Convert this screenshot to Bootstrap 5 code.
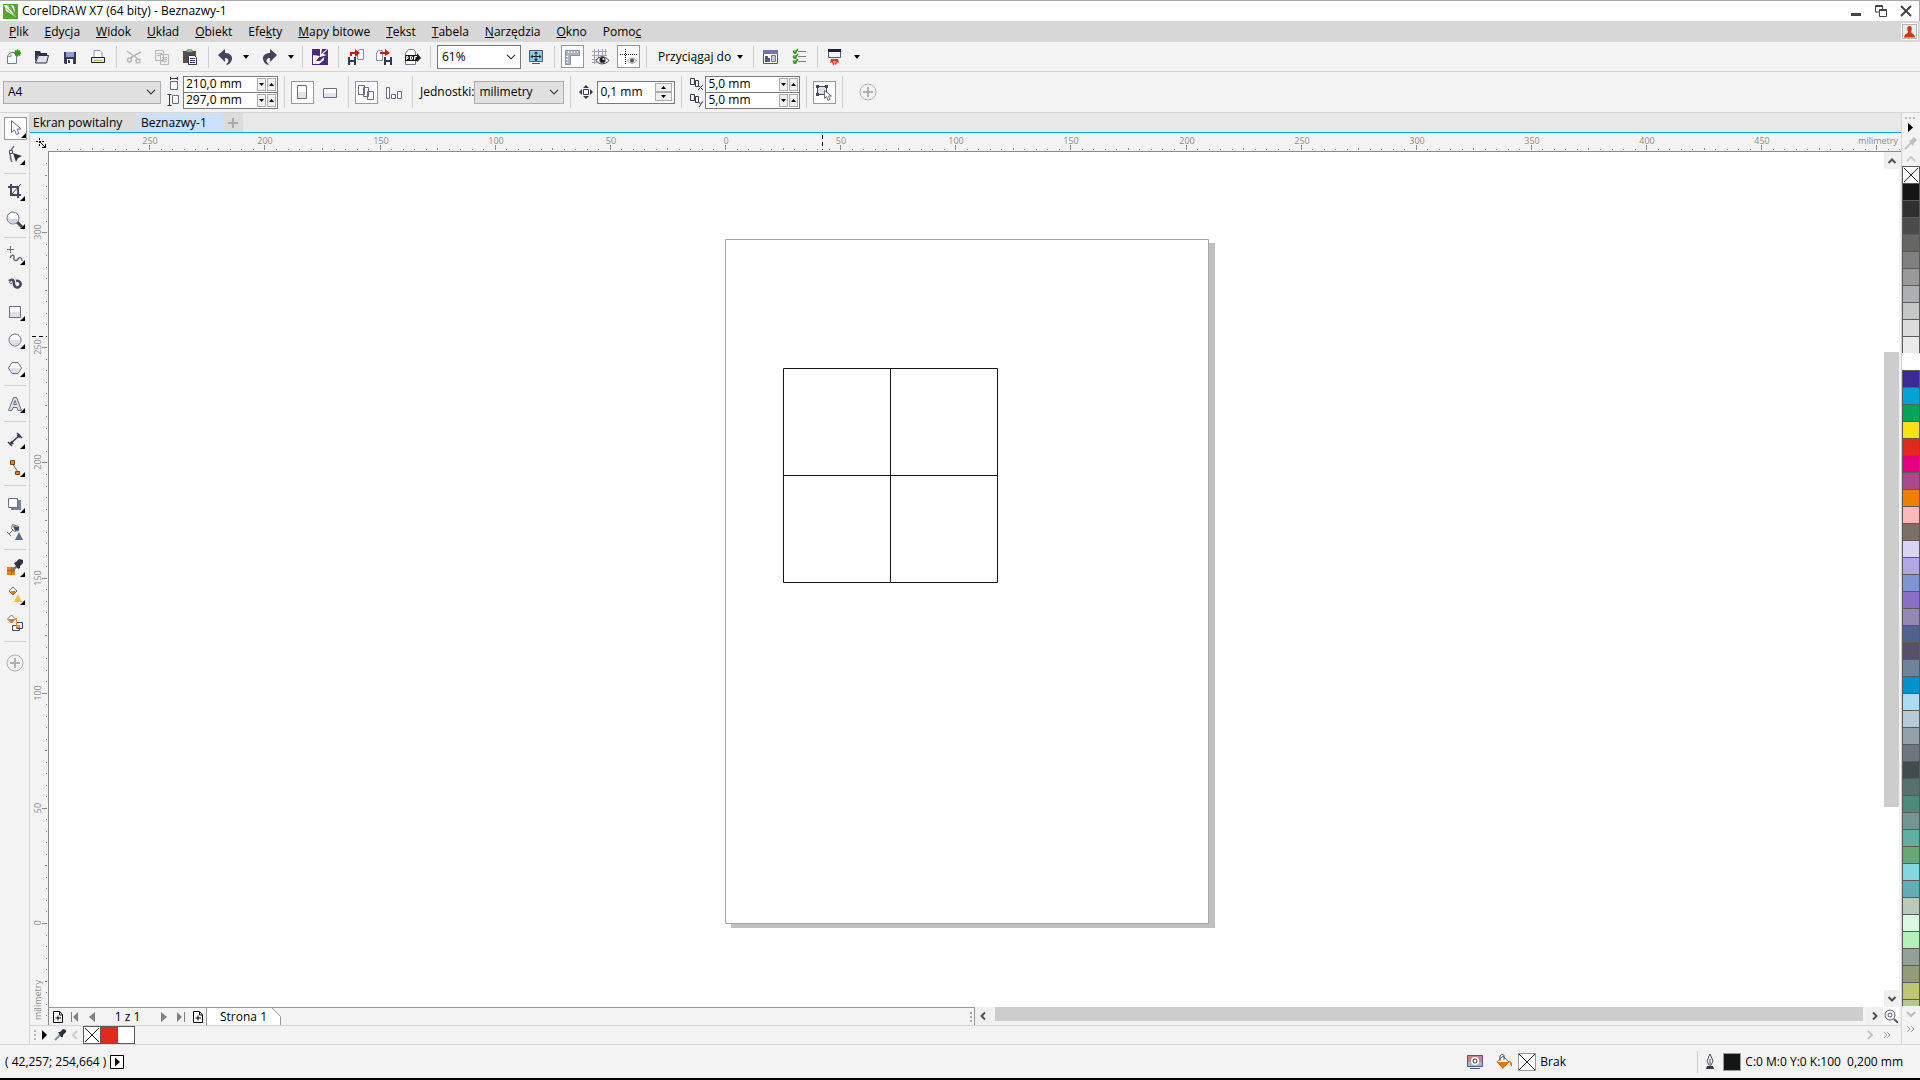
<!DOCTYPE html>
<html lang="pl">
<head>
<meta charset="utf-8">
<meta name="viewport" content="width=device-width, initial-scale=1">
<title>CorelDRAW X7 (64 bity) - Beznazwy-1</title>
<link href="https://cdn.jsdelivr.net/npm/bootstrap@5.3.0/dist/css/bootstrap.min.css" rel="stylesheet">
<script src="https://cdn.jsdelivr.net/npm/bootstrap@5.3.0/dist/js/bootstrap.bundle.min.js" defer></script>
<style>
:root{--ink:#45485f;--bar:#f3f3f3;--edge:#d4d4d4;--frame:#7a7a7a}
body{font-family:"Open Sans","Noto Sans",sans-serif;font-size:12px;line-height:16px;color:#000;background:var(--bar)}
body>*{flex:none}
svg{display:block;flex:none}
.fill{flex:1 1 0;min-width:0;min-height:0}
.btn,.form-select,.form-control{font-size:12px;line-height:16px;border-radius:0;color:#000;box-shadow:none}
.btn{border:0;padding:0;display:flex;align-items:center;justify-content:center}
.titlebar{height:21px;background:#fff;border-top:1px solid #aaa;border-right:1px solid #aaa;padding:0 1px 0 3px}
.winbtn{width:25px;height:20px}
.menubar{height:21px;background:#d7d7d7;padding:0 2px 0 9px;gap:16px}
.menubar a{color:#000;text-decoration:none}
.user-btn{width:17px;height:17px;background:#fff}
.toolrow{border-bottom:1px solid var(--edge)}
.row-std{height:30px}
.row-prop{height:41px;padding-left:3px}
.tool{width:28px;height:28px;flex:none}
.framed{width:23px;height:23px;border:1px solid #999;background:#fff;display:flex;align-items:center;justify-content:center}
.caret-btn{width:15px;height:28px;flex:none}
.vsep{width:1px;height:22px;background:#cfcfcf;margin:0 3px 0 4px;flex:none}
.row-prop .vsep{height:32px}
.vsep-box{margin-left:6px}
.form-select{height:23px;border:1px solid #adadad;background-color:#e1e1e1;padding:2px 20px 2px 4px;background-size:10px 10px;background-position:right 4px center}
.sel-zoom{width:84px;height:24px;border-color:var(--frame);background-color:#fff;margin:0 1px 0 3px}
.sel-paper{width:158px}.sel-unit{width:90px}
.nudge-mark{margin:0 1px 0 2px}
.dup-mark{margin:0 1px 0 4px}
.duo{width:95px;border:1px solid var(--frame);background:#fff}
.duo .spin{height:15px}
.duo .spin + .spin{border-top:1px solid var(--frame);height:16px}
.spin{display:flex;align-items:center;gap:1px;padding-right:1px}
.spin .form-control{border:0;padding:0 0 0 2px;height:15px;min-height:0;background:transparent;min-width:0;flex:1}
.step{width:9px;height:13px;background:#f0f0f0;border:1px solid #adadad}
.nudge{width:78px;height:23px;border:1px solid var(--frame);background:#fff;padding-right:2px}
.nudge .step{width:17px;height:9px}
.toolbox{width:30px;border-right:1px solid var(--edge);padding:1px 0 0 1px;flex:none}
.hsep{width:22px;height:1px;background:#cfcfcf;margin:3px 0 4px 3px}
.tabstrip{height:20px;background:#e8e8e8;border-bottom:1px solid #00a8ff;flex:none}
.doc-tab{height:19px;padding:0 3px;justify-content:flex-start;background:#dcdcdc}
.doc-tab.current{background:#cce0ff}
.tab-a{width:107px}.tab-b{width:86px;padding-left:4px}.tab-plus{width:20px;background:#dcdcdc;padding:0;justify-content:center}
.ruler-row{height:19px;flex:none}
.ruler-h{height:19px;border-bottom:1px solid #8a8a8a}
.ruler-v{width:19px;border-right:1px solid #8a8a8a;flex:none}
.ruler-label{font-size:9px;fill:#8c8c8c}
.canvas{background:#fff}
.vscroll{width:15px;margin-right:2px;background:#fff;flex:none}
.scroll-btn{background:#f0f0f0;width:16px;height:17px;flex:none}
.thumb{background:#cdcdcd}
.navrow{height:18px;padding-right:2px;flex:none}
.pages{width:926px;border-top:1px solid #999;border-right:1px solid #999;flex:none}
.page-btn{width:17px;height:16px}
.page-count{width:55px;text-align:center}
.page-tab{width:66px;height:17px;background:#fff;border-left:1px solid #999}
.strip{height:19px;border-top:1px solid var(--edge);flex:none}
.strip .page-btn{width:15px}
.swatch{width:17px;height:17px;border:1px solid #5a5a5a;border-width:1px 0 0 1px;padding:0;flex:none}
.strip .swatch{border-bottom-width:1px;height:18px}
.strip .swatch-last{width:18px;border-right-width:1px}
.palette{width:19px;flex:none;border-left:1px solid var(--edge)}
.palette .swatch{border-width:1px 1px 0 1px;width:18px}
.status{height:34px;border-top:1px solid var(--edge);padding:0 17px 0 5px}
.status-fill{width:153px}
.cell{width:18px;height:18px;border:1px solid #999}
.taskedge{height:2px;background:#000}
</style>
</head>
<body class="vh-100 d-flex flex-column overflow-hidden">

<header class="titlebar d-flex align-items-center">
  <svg width="15" height="15" viewBox="0 0 15 15"><path fill="#55a532" d="M0 0h15v15H0z"/><path fill="#fff" d="M1 1h4l8 12L3 7z"/><path stroke="#55a532" d="M1 3l11 9M4 1l9 11" stroke-width=".7"/><path fill="#fff" d="M8 1l3 1 1 7z"/></svg>
  <span class="ms-1">CorelDRAW X7 (64 bity) - Beznazwy-1</span>
  <div class="ms-auto d-flex">
    <button class="btn winbtn" aria-label="Minimalizuj"><svg width="12" height="12"><path fill="#444" d="M1 8h10v3H1z"/></svg></button>
    <button class="btn winbtn" aria-label="Przywróć"><svg width="12" height="12" fill="none" stroke="#444"><path d="M4 7H.5V.5h7V4M.5 1.5h7M4.500 4.500h7v7h-7zM4.500 5.500h7"/></svg></button>
    <button class="btn winbtn" aria-label="Zamknij"><svg width="12" height="12"><path stroke="#444" stroke-width="2" d="M1 1l10 10M11 1L1 11"/></svg></button>
  </div>
</header>

<nav class="menubar d-flex align-items-center">
  <a href="#"><u>P</u>lik</a><a href="#"><u>E</u>dycja</a><a href="#"><u>W</u>idok</a><a href="#"><u>U</u>kład</a><a href="#"><u>O</u>biekt</a><a href="#">Efe<u>k</u>ty</a><a href="#"><u>M</u>apy bitowe</a><a href="#"><u>T</u>ekst</a><a href="#"><u>T</u>abela</a><a href="#"><u>N</u>arzędzia</a><a href="#"><u>O</u>kno</a><a href="#">Pomo<u>c</u></a>
  <button class="btn user-btn ms-auto" aria-label="Konto"><svg width="15" height="15"><rect x=".5" y=".5" width="14" height="14" fill="#e9ecee" stroke="#b5b5b5"/><path fill="#cf3a12" d="M7.500 2C5.500 2 5 3.500 5.200 5c.1 1.500.8 2 .8 3 0 1.500-4 2-4 5.500h11C13 10 9 9.500 9 8c0-1 .7-1.500.8-3C10 3.500 9.500 2 7.500 2z"/></svg></button>
</nav>

<div class="toolrow row-std d-flex align-items-center">
  <button class="btn tool" aria-label="Nowy"><svg width="20" height="20"><path d="M3.500 16.500V9l3-3.500h4l2 3v8z" fill="#f8f8fb" stroke="#777a8c"/><path d="M4 9.500h3v-3" fill="none" stroke="#999"/><circle cx="13.500" cy="6" r="2.500" fill="#2c9a0c"/><path stroke="#2c9a0c" stroke-width="1.500" d="M13.500 2.500v7M10 6h7M11 3.500l5 5M16 3.500l-5 5"/></svg></button>
  <button class="btn tool" aria-label="Otwórz"><svg width="20" height="20"><path fill="#2c2f4e" d="M3 15V4h5l1 2h6v2H6z"/><path d="M6.500 8.500h10l-2 7.500H3.500z" fill="#dfe0ea" stroke="#2c2f4e"/></svg></button>
  <button class="btn tool" aria-label="Zapisz"><svg width="20" height="20"><path fill="#34375e" d="M4 5h12v12H5l-1-1z"/><path fill="#8c9ccb" d="M6 5h8v5H6z"/><path fill="#fff" d="M7 12h6v5H7z"/><path fill="#34375e" d="M8 13h2v3H8z"/></svg></button>
  <button class="btn tool" aria-label="Drukuj"><svg width="20" height="20"><path d="M6 11V3.500h6l2 2V11" fill="#fff" stroke="#8798a5"/><path d="M3.500 10.500h13v5h-13z" fill="#e8e8ee" stroke="#222"/><path fill="#b9b94a" d="M6 13h8v1H6z"/><path stroke="#222" d="M5 10.500h10"/></svg></button>
  <span class="vsep"></span>
  <button class="btn tool" aria-label="Wytnij" disabled><svg width="20" height="20" fill="none" stroke="#999" stroke-width="1.500"><path d="M3 4l11 8M17 5L6 11"/><circle cx="5.500" cy="13" r="2"/><circle cx="14" cy="14" r="2"/></svg></button>
  <button class="btn tool" aria-label="Kopiuj" disabled><svg width="20" height="20" fill="#eee" stroke="#999"><path d="M3.500 3.500h8v10h-8zM8.500 7.500h8v10h-8z"/><path d="M5 6.500h5M5 8.500h3M10 10.500h5M10 12.500h5M10 14.500h5"/></svg></button>
  <button class="btn tool" aria-label="Wklej"><svg width="20" height="20"><path fill="#565046" d="M3 4h13v12H3z"/><path fill="#cfdbd2" d="M6 5c0-3 7-3 7 0z" stroke="#38634d"/><path fill="#fff" stroke="#34375e" d="M8.500 8.500h6l2 2v7h-8z"/><path stroke="#34375e" d="M10 11.500h5M10 13.500h5M10 15.500h5"/></svg></button>
  <span class="vsep"></span>
  <button class="btn tool" aria-label="Cofnij"><svg width="20" height="20"><path fill="#45435a" d="M2 8l7-6v4c8 0 9 7 4 11-1 .8-3 1-3 0 3-1 4-6-1-6v4z"/></svg></button>
  <button class="btn caret-btn pe-1" aria-label="Lista cofania"><svg width="10" height="6"><path d="M2 1h6L5 5z"/></svg></button>
  <button class="btn tool" aria-label="Ponów"><svg width="20" height="20"><path fill="#45435a" d="M18 8l-7-6v4C3 6 2 13 7 17c1 .8 3 1 3 0-3-1-4-6 1-6v4z"/></svg></button>
  <button class="btn caret-btn me-1" aria-label="Lista ponawiania"><svg width="10" height="6"><path d="M2 1h6L5 5z"/></svg></button>
  <span class="vsep ms-0"></span>
  <button class="btn tool" aria-label="Corel CONNECT"><svg width="20" height="20"><path fill="#4b2a7b" d="M2 2h16v16H2z"/><path fill="#fff" d="M10 2h2l-1 5 6-5h1l-5 5 4 1-7 2zM3 8l7 1-4 5h4l4-4v3l-5 4H3z"/></svg></button>
  <span class="vsep"></span>
  <button class="btn tool" aria-label="Importuj"><svg width="20" height="20"><path d="M11.500 12.500V5l2-2.500h4v10z" fill="#fff" stroke="#8a8da8"/><path fill="#34375e" d="M2 10h8v8H2z"/><path fill="#fff" d="M4 10h4v3H4zM4 15h4v3H4z"/><path fill="#c61b12" d="M4 5h5V2l5 4-5 4V7H6v2H4z"/></svg></button>
  <button class="btn tool" aria-label="Eksportuj"><svg width="20" height="20"><path d="M2.500 13.500V6l2-2.500h4v10z" fill="#fff" stroke="#8a8da8"/><path fill="#34375e" d="M10 10h8v8h-8z"/><path fill="#fff" d="M12 10h4v3h-4zM12 15h4v3h-4z"/><path fill="#c61b12" d="M6 5h5V2l5 4-5 3V7H6z"/></svg></button>
  <button class="btn tool" aria-label="Publikuj do PDF"><svg width="20" height="20"><path d="M3.500 17.500V6l3-3.500h5l2 2v13z" fill="#fff" stroke="#777a8c"/><path fill="#18181c" d="M3 8h12V6l4 5-4 4v-1H3z"/><path stroke="#fff" fill="none" d="M4.500 13V9.500H6v2H4.500M8.500 9.500v3l2-.5V10zM12.500 13V9.500H15M12.500 11H14"/></svg></button>
  <span class="vsep"></span>
  <select class="form-select sel-zoom" aria-label="Poziom powiększenia"><option>61%</option></select>
  <button class="btn tool" aria-label="Podgląd pełnoekranowy"><svg width="20" height="20"><path d="M3.500 3.500h13v11h-13z" fill="#8ccbe0" stroke="#555873"/><path stroke="#555873" d="M6 16.500h8"/><path stroke="#16243c" d="M5 9.500h10M10 5v9"/><path fill="#16243c" d="M4.500 9.500l2-2v4zM15.500 9.500l-2-2v4zM10 4.500l2 2H8zM10 14l2-2H8z"/></svg></button>
  <span class="vsep"></span>
  <button class="btn tool" aria-label="Pokaż linijki"><span class="framed"><svg width="20" height="20"><path fill="#a7b3cb" stroke="#8492b0" d="M3.500 3.500h14v5h-9v9h-5z"/><path stroke="#fff" d="M6.500 4v2M9.500 4v2M12.500 4v2M15.500 4v2M4 9.500h2M4 12.500h2M4 15.500h2"/></svg></span></button>
  <button class="btn tool" aria-label="Pokaż siatkę"><svg width="20" height="20"><path stroke="#a3a1bd" d="M4.500 2v15M8.500 2v9M12.500 2v8M15.500 2v7M2 4.500h15M2 8.500h15M2 12.500h5M2 15.500h5"/><path fill="#f3f3f3" stroke="#3c3c46" d="M6 13.500c3-5 9-5 13 0-4 4.500-10 4.500-13 0z"/><circle cx="12.500" cy="13" r="3" fill="#22222c"/><circle cx="13.500" cy="12" r="1" fill="#fff"/></svg></button>
  <button class="btn tool" aria-label="Pokaż linie pomocnicze"><span class="framed"><svg width="20" height="20"><path stroke="#222" stroke-dasharray="1 1" d="M7.500 2v16M2 7.500h17"/><path fill="#fff" stroke="#999" d="M9.500 14c3-4 6-4 9 0-3 3-6 3-9 0z"/><circle cx="14" cy="13.500" r="2" fill="#50505e"/></svg></span></button>
  <span class="vsep"></span>
  <button class="btn ps-2 pe-1" aria-haspopup="true">Przyciągaj do<svg class="ms-1" width="10" height="6"><path d="M2 1h6L5 5z"/></svg></button>
  <span class="vsep"></span>
  <button class="btn tool" aria-label="Okno powitalne"><svg width="20" height="20"><path d="M2.500 3.500h14v13h-14z" fill="#fff" stroke="#55587c"/><path fill="#7376a0" d="M2 3h15v4H2z"/><path fill="#55587c" d="M4 9h3v2h2v4H4z"/><path d="M10.500 8.500h4v6h-4z" fill="#c6cadf" stroke="#7376a0"/></svg></button>
  <button class="btn tool" aria-label="Opcje"><svg width="20" height="20"><path stroke="#7c808d" d="M9 4.500h8M9 9.500h8M9 14.500h8"/><path stroke="#aaa" fill="none" d="M4.500 3.500h3v3h-3zM4.500 8.500h3v3h-3zM4.500 13.500h3v3h-3z"/><path stroke="#2c9a0c" stroke-width="1.500" fill="none" d="M4 4l2 2 3-4M4 9l2 2 3-4M4 14l2 2 3-4"/></svg></button>
  <span class="vsep"></span>
  <button class="btn tool" aria-label="Uruchamianie aplikacji"><svg width="20" height="20"><path d="M3.500 2.500h12v8h-12z" fill="#f4f4f8" stroke="#55587c"/><path fill="#1f2136" d="M3 2h13v3H3z"/><path fill="#e5321c" d="M6 12h7l1 4-2-1-1 3-1-1-2 1-1-3-2 1z"/><path fill="#f9c21c" d="M8 14h3l-1.500 4z"/></svg></button>
  <button class="btn caret-btn" aria-label="Lista aplikacji"><svg width="10" height="6"><path d="M2 1h6L5 5z"/></svg></button>
</div>

<div class="toolrow row-prop d-flex align-items-center">
  <select class="form-select sel-paper" aria-label="Rozmiar strony"><option>A4</option></select>
  <svg class="mx-1" width="14" height="32" fill="none" stroke="#33364f"><path d="M5.500 5.500h7v8h-7z" fill="#fff" stroke="#6a6d85"/><path d="M5 2.500h8M5.500 1v3M12.500 1v3M4.500 19v10M2.500 18.500h4M2.500 29.500h4"/><path d="M7.500 19.500h6v8h-6z" fill="#fff" stroke="#6a6d85"/></svg>
  <div class="duo">
    <div class="spin"><input class="form-control" value="210,0 mm" aria-label="Szerokość strony"><button class="btn step" aria-label="Mniej"><svg width="5" height="3"><path d="M0 0h5L2.500 3z"/></svg></button><button class="btn step" aria-label="Więcej"><svg width="5" height="3"><path d="M0 3h5L2.500 0z"/></svg></button></div>
    <div class="spin"><input class="form-control" value="297,0 mm" aria-label="Wysokość strony"><button class="btn step" aria-label="Mniej"><svg width="5" height="3"><path d="M0 0h5L2.500 3z"/></svg></button><button class="btn step" aria-label="Więcej"><svg width="5" height="3"><path d="M0 3h5L2.500 0z"/></svg></button></div>
  </div>
  <span class="vsep vsep-box"></span>
  <button class="btn tool" aria-label="Pionowo"><span class="framed"><svg width="20" height="20"><path d="M5.500 3.500h9v13h-9z" fill="#fff" stroke="#6a6d85"/><path fill="#e2e2ea" d="M6 10h8v6H6z"/></svg></span></button>
  <button class="btn tool" aria-label="Poziomo"><svg width="20" height="20"><path d="M3.500 6.500h13v9h-13z" fill="#fff" stroke="#6a6d85"/><path fill="#e2e2ea" d="M4 11h12v4H4z"/></svg></button>
  <span class="vsep"></span>
  <button class="btn tool" aria-label="Wszystkie strony"><span class="framed"><svg width="20" height="20" fill="#fff" stroke="#6a6d85"><path d="M2.500 3.500h6v9h-6zM7.500 5.500h5v9h-5zM11.500 9.500h6v8h-6z"/></svg></span></button>
  <button class="btn tool" aria-label="Bieżąca strona"><svg width="20" height="20" fill="#fff" stroke="#6a6d85"><path d="M2.500 5.500h3v11h-3zM7.500 12.500h4v4h-4zM13.500 9.500h4v7h-4z"/></svg></button>
  <span class="vsep"></span>
  <label class="ms-1" for="units">Jednostki:</label>
  <select id="units" class="form-select sel-unit"><option>milimetry</option></select>
  <span class="vsep vsep-box"></span>
  <svg class="nudge-mark" width="20" height="20"><path fill="#33364f" d="M10 3l3 3H7zM10 17l3-3H7zM3 10l3-3v6zM17 10l-3-3v6z"/><path fill="#fff" stroke="#33364f" d="M7.500 7.500h5v5h-5z"/></svg>
  <div class="nudge spin"><input class="form-control" value="0,1 mm" aria-label="Odległość przesunięcia"><div class="d-flex flex-column"><button class="btn step" aria-label="Więcej"><svg width="5" height="3"><path d="M0 3h5L2.500 0z"/></svg></button><button class="btn step" aria-label="Mniej"><svg width="5" height="3"><path d="M0 0h5L2.500 3z"/></svg></button></div></div>
  <span class="vsep vsep-box"></span>
  <svg class="dup-mark" width="15" height="32" fill="none" stroke="#33364f"><path d="M1.500 2.500h4v6h-4zM6.500 4.500h3v6h-3zM9 9l5 5M14 9l-5 5M1.500 18.500h4v6h-4zM6.500 20.500h3v6h-3zM9 25l2.500 3M14 25l-4 6"/></svg>
  <div class="duo">
    <div class="spin"><input class="form-control" value="5,0 mm" aria-label="Duplikat X"><button class="btn step" aria-label="Mniej"><svg width="5" height="3"><path d="M0 0h5L2.500 3z"/></svg></button><button class="btn step" aria-label="Więcej"><svg width="5" height="3"><path d="M0 3h5L2.500 0z"/></svg></button></div>
    <div class="spin"><input class="form-control" value="5,0 mm" aria-label="Duplikat Y"><button class="btn step" aria-label="Mniej"><svg width="5" height="3"><path d="M0 0h5L2.500 3z"/></svg></button><button class="btn step" aria-label="Więcej"><svg width="5" height="3"><path d="M0 3h5L2.500 0z"/></svg></button></div>
  </div>
  <span class="vsep vsep-box"></span>
  <button class="btn tool" aria-label="Traktuj jako wypełnione"><span class="framed"><svg width="20" height="20"><path d="M3.500 4.500h9v8h-9z" fill="#dcdfe8" stroke="#45485f"/><path fill="#45485f" d="M2 3h3v3H2zM11 3h3v3h-3zM2 11h3v3H2z"/><path fill="#fff" stroke="#6a6d85" d="M10.500 8.500v8l2-2 1.500 4 2-1-1.500-3.500h3z"/></svg></span></button>
  <span class="vsep"></span>
  <button class="btn tool ms-2" aria-label="Dostosuj"><svg width="20" height="20" fill="none" stroke="#b0b0b0"><circle cx="10" cy="10" r="8"/><path stroke-width="2" d="M10 5v10M5 10h10"/></svg></button>
</div>

<main class="d-flex fill overflow-hidden">
  <aside class="toolbox" id="toolbox">
    <button class="btn tool" aria-label="Wskaźnik"><span class="framed"><svg width="28" height="28"><path fill="#fff" stroke="#6a6d85" d="M10.500 6.500v12l3-2.500 2 4.500 2.500-1-2-4.500h4z"/><path d="M25 19v5h-5z"/></svg></span></button>
    <button class="btn tool" aria-label="Kształt"><svg width="28" height="28"><path fill="none" stroke="#6a6d85" stroke-width="1.500" d="M13 4c-5 5-5 10-2 16"/><path fill="#fff" stroke="#45485f" d="M8.500 8.500h3v3h-3z"/><path fill="#2c2f3e" d="M12 11l9 3-4 2-2 4z"/><path d="M24 18v5h-5z"/></svg></button>
    <div class="hsep"></div>
    <button class="btn tool" aria-label="Kadruj"><svg width="28" height="28"><path fill="none" stroke="#45485f" stroke-width="2" d="M10 6v11h10M7 9h10v11"/><path stroke="#45485f" d="M10 17L20 6"/><path d="M24 18v5h-5z"/></svg></button>
    <button class="btn tool" aria-label="Powiększenie"><svg width="28" height="28"><path stroke="#45485f" stroke-width="3" d="M16 16l5 5"/><circle cx="12" cy="12" r="6" fill="#fff" stroke="#6a6d85"/><path fill="#ccd2df" d="M7 13h10c-1 6-9 6-10 0z"/><path d="M24 18v5h-5z"/></svg></button>
    <div class="hsep"></div>
    <button class="btn tool" aria-label="Rysunek odręczny"><svg width="28" height="28"><path fill="none" stroke="#6a6d85" d="M9.500 4v7M6 7.500h7"/><path fill="none" stroke="#6a6d85" stroke-width="1.500" d="M9 16c2-5 5-2 4 0s2 4 4 1 4-1 4 2"/><path d="M24 18v5h-5z"/></svg></button>
    <button class="btn tool" aria-label="Środki artystyczne"><svg width="28" height="28"><path fill="none" stroke="#45485f" stroke-width="2.500" d="M8 11c4-3 5 0 5 3s4 5 6 2-1-6-4-5"/><path fill="none" stroke="#6a6d85" d="M8 12c1 2 3 2 4 0"/></svg></button>
    <button class="btn tool" aria-label="Prostokąt"><svg width="28" height="28"><path fill="#fff" stroke="#6a6d85" d="M8.500 8.500h11v11h-11z"/><path fill="#dedfe9" d="M9 14h10v5H9z"/><path d="M24 18v5h-5z"/></svg></button>
    <button class="btn tool" aria-label="Elipsa"><svg width="28" height="28"><circle cx="14" cy="14" r="6" fill="#fff" stroke="#6a6d85"/><path fill="#dedfe9" d="M8.500 14h11c-1 7-10 7-11 0z"/><path d="M24 18v5h-5z"/></svg></button>
    <button class="btn tool" aria-label="Wielokąt"><svg width="28" height="28"><path fill="#fff" stroke="#6a6d85" d="M7.500 14l3.500-5.500h6l3.500 5.500-3.500 5.500h-6z"/><path fill="#dedfe9" d="M8.500 14h11l-3 5h-5z"/><path d="M24 18v5h-5z"/></svg></button>
    <div class="hsep"></div>
    <button class="btn tool" aria-label="Tekst"><svg width="28" height="28"><path fill="#dedfe9" stroke="#6a6d85" fill-rule="evenodd" d="M7.500 20.500l5-13h3l5 13h-3.500l-1-3h-4l-1 3zM12.500 14.500h3l-1.500-4z"/><path d="M24 18v5h-5z"/></svg></button>
    <div class="hsep"></div>
    <button class="btn tool" aria-label="Wymiar równoległy"><svg width="28" height="28"><path stroke="#33364f" stroke-width="1.500" d="M9 18l10-9M7 16l4 4M16 7l5 5"/><path fill="#33364f" d="M9 18.500l1-4 3 3.500zM19.500 8.500l-1 4-3-3.500z"/><path d="M24 18v5h-5z"/></svg></button>
    <button class="btn tool" aria-label="Łącznik liniowy"><svg width="28" height="28"><path stroke="#6a6d85" d="M11 9l6 9"/><path fill="#f08000" stroke="#7a4516" d="M9.500 6.500h4v4h-4zM14.500 17.500h4v3h-4z"/><path d="M24 18v5h-5z"/></svg></button>
    <div class="hsep"></div>
    <button class="btn tool" aria-label="Cień"><svg width="28" height="28"><path fill="#7b7e9c" d="M10 10h10v10H10z"/><path fill="#fff" stroke="#6a6d85" d="M7.500 8.500h9v9h-9z"/><path d="M24 18v5h-5z"/></svg></button>
    <button class="btn tool" aria-label="Przezroczystość"><svg width="28" height="28"><path fill="#fff" stroke="#6a6d85" d="M11.500 6.500l6 2v4l-4 1-3-3zM12 12l-4 4M6 14l4 4"/><path fill="#35506e" d="M12 8l6 1v3l-4 1z"/><path fill="#5c6f8b" d="M18 14l4 8h-8z"/></svg></button>
    <div class="hsep"></div>
    <button class="btn tool" aria-label="Próbnik kolorów"><svg width="28" height="28"><path fill="#f08000" d="M6 13h8v8H6z"/><path stroke="#c15800" d="M6 16.500h8M10.500 13v8"/><path stroke="#6a6d85" stroke-width="2" d="M11 17l6-6"/><path fill="#2c2f3e" d="M13 9l2-1 3-3 4 1v3l-3 3v2l-2 1z"/><path d="M24 18v5h-5z"/></svg></button>
    <button class="btn tool" aria-label="Interaktywne wypełnienie"><svg width="28" height="28"><path fill="#fff" stroke="#6a6d85" d="M8 9l4-4 4 4-4 4z"/><path fill="#e67700" d="M9 9h6l-3 4z"/><path fill="#f0c04a" d="M17 12l4 8h-8z"/><path d="M24 18v5h-5z"/></svg></button>
    <button class="btn tool" aria-label="Inteligentne wypełnienie"><svg width="28" height="28"><path fill="#fff" stroke="#6a6d85" d="M6.500 9l4-4 4 4-4 4z"/><path fill="#e67700" d="M7 9h7l-3 4z"/><path fill="#fff" stroke="#45485f" d="M15.500 12.500h6v6h-6zM11.500 15.500h7v5h-7z"/><path fill="#f08c1c" d="M15 8h1v7h3v3h-4z"/></svg></button>
    <div class="hsep"></div>
    <button class="btn tool mt-2" aria-label="Dostosuj narzędzia"><svg width="28" height="28" fill="none" stroke="#b0b0b0"><circle cx="14" cy="13" r="8"/><path stroke-width="2" d="M14 8v10M9 13h10"/></svg></button>
  </aside>

  <section class="d-flex flex-column fill overflow-hidden">
    <div class="tabstrip d-flex">
      <button class="btn doc-tab tab-a">Ekran powitalny</button>
      <button class="btn doc-tab current tab-b">Beznazwy-1</button>
      <button class="btn doc-tab tab-plus" aria-label="Nowa karta"><svg width="12" height="12"><path stroke="#aaa" stroke-width="2" d="M6 1v10M1 6h10"/></svg></button>
    </div>
    <div class="ruler-row d-flex">
      <svg width="18" height="19"><path fill="none" stroke="#000" stroke-dasharray="2 1" d="M6 8.500h9M9.500 5v9"/><path stroke="#000" d="M10 9l5 5M15.500 11v4M12 14.500h4"/></svg>
      <div class="fill"><svg id="rulerH" class="ruler-h w-100" height="19"></svg></div>
    </div>
    <div class="d-flex fill overflow-hidden">
      <div class="ruler-v"><svg id="rulerV" width="18" height="100%"></svg></div>
      <div class="d-flex flex-column fill overflow-hidden">
        <div class="d-flex fill overflow-hidden">
          <div class="canvas fill">
            <svg width="100%" height="100%">
              <path fill="#c0c0c0" d="M682 91h484v685H682z"/>
              <path fill="#fff" stroke="#a6a6a6" d="M676.500 87.500h483v684h-483z"/>
              <path fill="none" stroke="#141414" d="M734.500 216.500h214v214h-214zM841.500 216v214M734 323.500h214"/>
            </svg>
          </div>
          <div class="vscroll d-flex flex-column">
            <button class="btn scroll-btn" aria-label="W górę"><svg width="10" height="8"><path fill="none" stroke="#505050" stroke-width="2" d="M1.500 6L5 2.500 8.500 6"/></svg></button>
            <div class="fill d-flex flex-column"><div style="height:22.300%"></div><div class="thumb" style="height:55.400%"></div></div>
            <button class="btn scroll-btn" aria-label="W dół"><svg width="10" height="8"><path fill="none" stroke="#505050" stroke-width="2" d="M1.500 2L5 5.500 8.500 2"/></svg></button>
          </div>
        </div>
        <div class="navrow d-flex">
          <div class="pages d-flex align-items-center">
            <button class="btn page-btn" aria-label="Dodaj stronę przed"><svg width="10" height="12" fill="#fff" stroke="#000"><path d="M.5.5h6l3 3v8h-9zM6.500 1v3H9M5 4.500v5M2.500 7H8"/></svg></button>
            <button class="btn page-btn" aria-label="Pierwsza"><svg width="8" height="10"><path fill="#808080" d="M0 0h1v10H0zM7 0v10L2 5z"/></svg></button>
            <button class="btn page-btn" aria-label="Poprzednia"><svg width="6" height="10"><path fill="#808080" d="M6 0v10L0 5z"/></svg></button>
            <span class="page-count">1 z 1</span>
            <button class="btn page-btn" aria-label="Następna"><svg width="6" height="10"><path fill="#808080" d="M0 0v10l6-5z"/></svg></button>
            <button class="btn page-btn" aria-label="Ostatnia"><svg width="8" height="10"><path fill="#808080" d="M7 0h1v10H7zM0 0v10l5-5z"/></svg></button>
            <button class="btn page-btn" aria-label="Dodaj stronę po"><svg width="10" height="12" fill="#fff" stroke="#000"><path d="M.5.5h6l3 3v8h-9zM6.500 1v3H9M5 4.500v5M2.500 7H8"/></svg></button>
            <button class="btn page-tab ps-2">Strona 1</button>
            <svg width="9" height="17"><path fill="#fff" d="M0 0l8 8v9H0z"/><path fill="none" stroke="#999" d="M0 0l8.500 8.500V17"/></svg>
            <svg class="ms-auto" width="4" height="12"><path fill="#aaa" d="M0 1h2v2H0zM0 5h2v2H0zM0 9h2v2H0z"/></svg>
          </div>
          <button class="btn scroll-btn" aria-label="W lewo"><svg width="8" height="10"><path fill="none" stroke="#505050" stroke-width="2" d="M6 1.500L2.500 5 6 8.500"/></svg></button>
          <div class="thumb fill ms-1 me-1 mb-1"></div>
          <button class="btn scroll-btn" aria-label="W prawo"><svg width="8" height="10"><path fill="none" stroke="#505050" stroke-width="2" d="M2 1.500L5.500 5 2 8.500"/></svg></button>
          <button class="btn scroll-btn bg-white" aria-label="Nawigator"><svg width="14" height="14" fill="none" stroke="#55587c"><circle cx="6" cy="6" r="5"/><circle cx="6" cy="6" r="2"/><path stroke-width="2" d="M10 10l4 4"/></svg></button>
        </div>
      </div>
    </div>
    <div class="strip d-flex align-items-center">
      <svg class="ms-1" width="3" height="14"><path fill="#bbb" d="M0 2h2v2H0zM0 6h2v2H0zM0 10h2v2H0z"/></svg>
      <button class="btn page-btn" aria-label="Menu palety"><svg width="6" height="10"><path d="M0 0v10l5-5z"/></svg></button>
      <button class="btn page-btn" aria-label="Próbnik"><svg width="14" height="14"><path stroke="#7d9294" stroke-width="2" d="M2 12l6-6"/><path fill="#2c2f3e" d="M5 4h2l3-3 3 1v2l-3 3v2L8 9z"/></svg></button>
      <svg class="ms-1 me-1" width="8" height="10"><path fill="none" stroke="#ccc" stroke-width="2" d="M6 1L2 5l4 4"/></svg>
      <button class="btn swatch" style="background:#fff" aria-label="Brak"><svg width="16" height="16"><path stroke="#222" d="M1 1l14 14M15 1L1 15"/></svg></button>
      <button class="btn swatch" style="background:#df2a1c" aria-label="Czerwony"></button>
      <button class="btn swatch swatch-last" style="background:#fff" aria-label="Biały"></button>
      <svg class="ms-auto me-1" width="32" height="12" fill="none" stroke="#c4c4c4"><path stroke-width="2" d="M3 2l4 4-4 4"/><path stroke="#aaa" d="M19 3l3 3-3 3M22 3l3 3-3 3"/></svg>
    </div>
  </section>

  <aside class="palette d-flex flex-column">
    <svg width="17" height="53"><path fill="#bbb" d="M3 4h2v2H3zM7 4h2v2H7zM11 4h2v2h-2z"/><path d="M6 10v9l5-4.500z"/><path stroke="#c2c2c2" stroke-width="2" d="M3 36l6-6"/><path fill="#bdbdbd" d="M7 28l2-1 3-3 3 3-3 3-1 3z"/><path fill="none" stroke="#ccc" stroke-width="2" d="M5 48l4-4 4 4"/></svg>
    <div id="palette" class="fill overflow-hidden d-flex flex-column" role="group" aria-label="Paleta kolorów"></div>
    <svg width="17" height="38"><path fill="none" stroke="#bbb" stroke-width="2" d="M5 6l4 4 4-4"/><path fill="none" stroke="#aaa" d="M5 20l3 3-3 3M9 20l3 3-3 3"/></svg>
  </aside>
</main>

<footer class="status d-flex align-items-center">
  <span>( 42,257; 254,664 )</span>
  <button class="btn ms-1" aria-label="Pokaż szczegóły"><svg width="14" height="14"><path fill="#fff" stroke="#000" d="M.5.5h13v13H.5z"/><path d="M5 2.500v9L10 7z"/></svg></button>
  <svg class="ms-auto" width="19" height="16"><path fill="#c9838a" stroke="#55587c" d="M.5 1.500h15v11H.5z"/><path fill="#9bb8d8" d="M1 8h14v4H1z"/><circle cx="8" cy="7" r="4" fill="#fff"/><circle cx="8" cy="7" r="2" fill="#fff" stroke="#333"/><path stroke="#55587c" d="M3 14.500h10"/></svg>
  <svg class="ms-2 me-1" width="20" height="18"><path fill="#fff" stroke="#6a6d85" d="M3 9l6-6 6 6-6 6z"/><path fill="#e67700" d="M3 9h12l-6 7zM15 7l3 3v4l-2-3z"/><path fill="none" stroke="#45485f" d="M6 8V3c1-2 4-2 4 0v4"/></svg>
  <svg class="cell bg-white" width="18" height="18"><path stroke="#222" d="M0 0l16 16M16 0L0 16"/></svg>
  <span class="status-fill ms-1">Brak</span>
  <span class="vsep"></span>
  <svg class="ms-1 me-2" width="10" height="18"><path fill="#fff" stroke="#45485f" d="M5 1l3 7-2 4H4L2 8zM5 6v5"/><path fill="#33364f" d="M2 13h6l1 3H1z"/></svg>
  <span class="cell" style="background:#141615"></span>
  <span class="ms-1">C:0 M:0 Y:0 K:100&nbsp; 0,200 mm</span>
</footer>
<div class="taskedge"></div>

<script>
// Colour palette docked at the right edge; the first entry is "no colour".
const colours = ['none','#141615','#30302e','#4b4b4b','#666664','#808080','#999999','#adafb2','#c5c6c6','#dadbda','#ebebeb','#ffffff','#3b2a98','#00a3d9','#00a45c','#f9e017','#df2a1c','#e2007f','#aa498c','#ef7f00','#fdb8bc','#7e6f66','#d9d3f4','#b2a6e3','#7b96d2','#8b70c9','#9489b5','#4f6290','#575068','#6f839b','#0091cf','#addbf3','#b8cad7','#92a1aa','#6b767e','#424b4d','#57706e','#4e8a7a','#749593','#60b09f','#67a875','#81d9df','#62adb8','#b9cabb','#ddf8e2','#b5f0bb','#93a096','#939c78','#bec674','#b9c798'];
document.getElementById('palette').innerHTML = colours.map(c => c === 'none'
  ? '<button class="btn swatch" style="background:#fff" aria-label="Brak"><svg width="16" height="16"><path stroke="#222" d="M1 1l14 14M15 1L1 15"/></svg></button>'
  : `<button class="btn swatch" style="background:${c}${c === '#ffffff' ? ';border-color:#fff' : ''}" aria-label="${c}"></button>`).join('');

// Rulers: millimetres to pixels at the current zoom.
const scale = 2.3026;
function drawRulers() {
  const h = document.getElementById('rulerH'), v = document.getElementById('rulerV');
  const w = h.parentNode.clientWidth - 2, ht = v.parentNode.clientHeight;
  const x0 = 677, y0 = 771;
  let out = '', ticks = '';
  for (let mm = -290; mm <= 900; mm += 5) {
    const x = Math.round(x0 + mm * scale);
    if (x < 2 || x > w) continue;
    const len = mm % 50 === 0 ? 5 : mm % 25 === 0 ? 2 : 1;
    ticks += `M${x + .5} ${17 - len}v${len}`;
    if (mm % 50 === 0 && x < w - 60) out += `<text class="ruler-label" text-anchor="middle" x="${x + 1}" y="11">${Math.abs(mm)}</text>`;
  }
  h.innerHTML = `<path stroke="#8a8a8a" d="${ticks}"/><path stroke="#000" stroke-dasharray="4 3" d="M774.500 2v15"/>${out}<text class="ruler-label" text-anchor="end" x="${w - 1}" y="11">milimetry</text>`;
  out = ''; ticks = '';
  for (let mm = -500; mm <= 330; mm += 5) {
    const y = Math.round(y0 - mm * scale);
    if (y < 2 || y > ht - 5) continue;
    const len = mm % 50 === 0 ? 5 : mm % 25 === 0 ? 2 : 1;
    ticks += `M${17 - len} ${y + .5}h${len}`;
    if (mm % 50 === 0 && y < ht - 50) out += `<text class="ruler-label" text-anchor="middle" transform="translate(11 ${y}) rotate(-90)">${Math.abs(mm)}</text>`;
  }
  v.innerHTML = `<path stroke="#8a8a8a" d="${ticks}"/><path stroke="#000" stroke-dasharray="4 3" d="M2 184.500h15"/>${out}<text class="ruler-label" transform="translate(11 ${ht - 5}) rotate(-90)">milimetry</text>`;
}
drawRulers();
addEventListener('resize', drawRulers);
</script>
</body>
</html>
